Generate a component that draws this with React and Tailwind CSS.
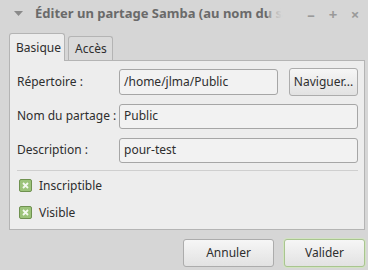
import React from 'react';

function Check({ label }) {
    return (
        <div className="flex items-center h-[27px]">
            <div className="w-[13px] h-[13px] ml-[9px] mr-[7px] rounded-[2px] border border-[#6f9150] bg-[#9cc37a] flex items-center justify-center">
                <svg width="7" height="7" viewBox="0 0 7 7">
                    <path d="M1 1 L6 6 M6 1 L1 6" stroke="#f4f9ef" strokeWidth="1.8" />
                </svg>
            </div>
            <span>{label}</span>
        </div>
    );
}

function Field({ label, value }) {
    return (
        <div className="flex items-center h-[26px]">
            <div className="w-[109px] pl-[7px] whitespace-nowrap">{label}</div>
            <div className="flex-1 h-[25px] rounded-[3px] border border-[#a6a6a6] bg-[#f2f2f2] px-[4px] flex items-center">{value}</div>
        </div>
    );
}

export default function App() {
    return (
        <div className="w-[368px] h-[270px] bg-[#d6d6d6] text-[12px] text-[#2e2e2e] overflow-hidden" style={{ fontFamily: '"Noto Sans", "Open Sans", sans-serif' }}>
            <div className="h-[28px] flex items-center">
                <svg className="ml-[14px] mr-[12px]" width="9" height="6" viewBox="0 0 9 6"><path d="M0 0 L9 0 L4.5 5 Z" fill="#8a8a8a" /></svg>
                <div className="relative whitespace-nowrap font-bold text-[13px] text-[#6a6a6a]">
                    Éditer un partage Samba (au nom du s
                    <div className="absolute inset-y-0 right-0 w-[14px] bg-gradient-to-r from-[#d6d6d6]/40 to-[#d6d6d6]" />
                </div>
                <div className="ml-auto flex items-center pr-[2px] text-[#9a9a9a] font-bold text-[15px]">
                    <span className="w-[22px] text-center">–</span>
                    <span className="w-[22px] text-center">+</span>
                    <span className="w-[22px] text-center">×</span>
                </div>
            </div>
            <div className="pl-[9px] pr-[3px]">
                <div className="flex items-end gap-[3px] h-[32px]">
                    <div className="h-[28px] px-[6px] flex items-center bg-[#ededed] border border-b-0 border-[#b4b4b4] rounded-t-[3px] relative top-[1px] w-[56px]">Basique</div>
                    <div className="h-[24px] px-[6px] flex items-center bg-[#dadada] border border-b-0 border-[#b4b4b4] rounded-t-[3px] w-[45px]">Accès</div>
                </div>
                <div className="h-[170px] bg-[#ededed] border border-[#b4b4b4] pt-[8px] pr-[6px] flex flex-col">
                    <div className="flex items-center h-[26px]">
                        <div className="w-[109px] pl-[7px]">Répertoire :</div>
                        <div className="w-[159px] h-[26px] rounded-[3px] border border-[#a6a6a6] bg-[#f2f2f2] px-[4px] flex items-center">/home/jlma/Public</div>
                        <div className="ml-auto w-[69px] h-[28px] rounded-[3px] border border-[#acacac] bg-gradient-to-b from-[#f6f6f6] to-[#e2e2e2] flex items-center justify-center">Naviguer...</div>
                    </div>
                    <div className="mt-[8px]"><Field label="Nom du partage :" value="Public" /></div>
                    <div className="mt-[8px]"><Field label="Description :" value="pour-test" /></div>
                    <div className="mt-[7px] ml-[7px] h-px bg-[#cfcfcf]" />
                    <div className="mt-[1px]">
                        <Check label="Inscriptible" />
                        <Check label="Visible" />
                    </div>
                </div>
                <div className="flex justify-end gap-[10px] mt-[9px]">
                    <div className="w-[91px] h-[28px] rounded-[3px] border border-[#acacac] bg-gradient-to-b from-[#f6f6f6] to-[#e2e2e2] flex items-center justify-center">Annuler</div>
                    <div className="w-[81px] h-[28px] rounded-[3px] border border-[#a9c58f] bg-gradient-to-b from-[#f6f6f6] to-[#e2e2e2] shadow-[0_0_0_1px_#d2e3c2] flex items-center justify-center">Valider</div>
                </div>
            </div>
        </div>
    );
}
